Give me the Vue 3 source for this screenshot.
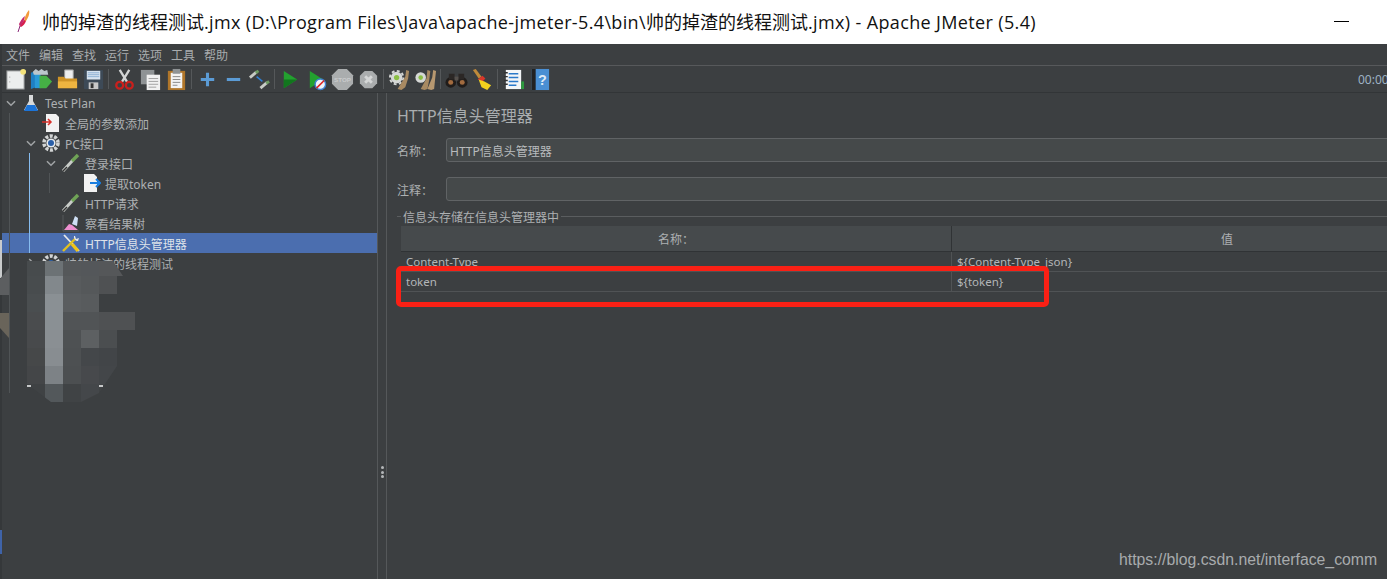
<script setup>
const mosaicRows = [
  ['#474b4d', '#6c7275', '#55585a', '#54575a', '#555759', '#555759', ''],
  ['#484c4e', '#82888c', '#585b5d', '#55585a', '#4f5153', '', ''],
  ['#4a4e50', '#8a9094', '#5a5d5f', '#585b5d', '', '', ''],
  ['#4a4c4e', '#8a9094', '#515456', '#515456', '#4f5153', '#4f5153', ''],
  ['#484a4c', '#8a8f93', '#4e5153', '#5d6062', '#4b4e50', '', ''],
  ['#464849', '#888d91', '#4d5052', '#44474a', '#424548', '', ''],
  ['#444648', '#7d8286', '#4c4f51', '#47494c', '#434649', '', ''],
  ['#3f4244', '#53585b', '#404345', '#44474a', '#404345', '', ''],
]
const mosaicCells = mosaicRows.flat()
</script>

<template>
  <div class="page">
    <header class="titlebar">
      <svg class="feather" width="14" height="24" viewBox="0 0 14 24">
        <path d="M12 1 C13 5 11 9 9 12 L7 12 C8 8 9 4 12 1Z" fill="#f39a3a" />
        <path d="M9 12 C8 15 6 17 4 18 L3 17 C4 15 6 13 7 11Z" fill="#d81f4b" />
        <path d="M7 11 C6 14 4 16 3 18 L2 15 C3 13 5 9 8 7Z" fill="#c42a6c" />
        <path d="M3 17 L1 23" stroke="#8b2a7a" stroke-width="1" />
      </svg>
      <span class="title"><span class="cjk">帅的掉渣的线程测试</span>.jmx (D:\Program Files\Java\apache-jmeter-5.4\bin\<span class="cjk">帅的掉渣的线程测试</span>.jmx) - Apache JMeter (5.4)</span>
      <i class="minimize"></i>
    </header>

    <nav class="menubar">
      <span>文件</span><span>编辑</span><span>查找</span><span>运行</span><span>选项</span><span>工具</span><span>帮助</span>
    </nav>

    <div class="toolbar">
      <div class="tool"><svg viewBox="0 0 24 24"><rect x="3" y="3" width="18" height="19" fill="#eceeee" stroke="#8d9092" /><circle cx="20" cy="4" r="3" fill="#f3e27a" /><path d="M6 9v1M6 14v1" stroke="#999" /></svg></div>
      <div class="tool"><svg viewBox="0 0 24 24"><path d="M1 5l5-2v17l-5 2z" fill="#1f7fc4" /><path d="M5 5h6v16H5z" fill="#2a9ad8" /><path d="M10 8h7l6 6-6 7h-7z" fill="#45b045" /><path d="M3 4l3-3 3 2 3-2 3 2 3-1 1 5H4z" fill="#bcc6cc" /></svg></div>
      <div class="tool"><svg viewBox="0 0 24 24"><path d="M9 2h9v10H9z" fill="#eee" stroke="#999" /><path d="M2 9h6l2 2h12v10H2z" fill="#cf9326" /><path d="M2 14h20v7H2z" fill="#eeb440" /></svg></div>
      <div class="tool"><svg viewBox="0 0 24 24"><rect x="2" y="2" width="20" height="20" rx="1" fill="#3d4a57" /><rect x="5" y="3" width="14" height="9" fill="#d7e3ef" /><path d="M6 5h12M6 7h12M6 9h12" stroke="#8bb0d3" /><rect x="7" y="15" width="10" height="7" fill="#c8c8c8" /><rect x="9" y="16" width="3" height="5" fill="#333" /></svg></div>
      <i class="sep"></i>
      <div class="tool"><svg viewBox="0 0 24 24" fill="none"><path d="M7 2l8 13M17 2L9 15" stroke="#d4d6d6" stroke-width="2.4" /><circle cx="7" cy="18" r="3.6" stroke="#c9201d" stroke-width="2.4" /><circle cx="17" cy="18" r="3.6" stroke="#c9201d" stroke-width="2.4" /></svg></div>
      <div class="tool"><svg viewBox="0 0 24 24"><rect x="2" y="2" width="14" height="15" fill="#8f9395" /><rect x="8" y="7" width="14" height="16" fill="#f1f1f1" /><path d="M10 11h10M10 14h10M10 17h10M10 20h8" stroke="#a0a0a0" /></svg></div>
      <div class="tool"><svg viewBox="0 0 24 24"><rect x="3" y="3" width="18" height="20" fill="#b0762a" /><rect x="6" y="5" width="12" height="16" fill="#f3f3f3" /><rect x="8" y="1" width="8" height="5" fill="#8f9395" /><path d="M8 9h8M8 12h8M8 15h8M8 18h5" stroke="#888" /></svg></div>
      <i class="sep"></i>
      <div class="tool"><svg viewBox="0 0 24 24"><path d="M12 5v14M5 12h14" stroke="#5b9bd5" stroke-width="3.2" /></svg></div>
      <div class="tool"><svg viewBox="0 0 24 24"><path d="M5 12h14" stroke="#5b9bd5" stroke-width="3.2" /></svg></div>
      <div class="tool"><svg viewBox="0 0 24 24"><path d="M2 10L9 4" stroke="#c7cbc6" stroke-width="3" /><path d="M8 5l3-2" stroke="#6e9c63" stroke-width="3" /><path d="M13 21l7-6" stroke="#c7cbc6" stroke-width="3" /><path d="M19 16l3-2" stroke="#6e9c63" stroke-width="3" /><path d="M9 9l6 5" stroke="#2f7fd2" stroke-width="1.6" /></svg></div>
      <i class="sep"></i>
      <div class="tool"><svg viewBox="0 0 24 24"><path d="M5 3l14 9-14 9z" fill="#23a12f" /><path d="M5 12h14l-14 9z" fill="#12761e" /></svg></div>
      <div class="tool"><svg viewBox="0 0 24 24"><path d="M5 3l14 9-14 9z" fill="#23a12f" /><circle cx="16" cy="17" r="5.5" fill="#eef4fa" stroke="#3f7fd0" stroke-width="1.5" /><path d="M12 21l8-8" stroke="#d22" stroke-width="1.6" /></svg></div>
      <div class="tool"><svg viewBox="0 0 24 24"><path d="M7.500 1h9L23 7.500v9L16.500 23h-9L1 16.500v-9z" fill="#aaadae" /><text x="12" y="15" text-anchor="middle" class="stop">STOP</text></svg></div>
      <div class="tool"><svg viewBox="0 0 24 24"><path d="M8 3h8l5 5v8l-5 5H8l-5-5V8z" fill="#aaadae" /><path d="M8.500 8.500l7 7M15.500 8.500l-7 7" stroke="#d4d6d6" stroke-width="3" /></svg></div>
      <i class="sep"></i>
      <div class="tool"><svg viewBox="0 0 24 24"><circle cx="9" cy="10" r="6" fill="#d6d8d6" /><circle cx="9" cy="10" r="7" fill="none" stroke="#d6d8d6" stroke-width="2" stroke-dasharray="3 2.500" /><circle cx="9" cy="10" r="2.800" fill="#8bbf45" /><path d="M14 23l-4-1 8-13 1-7 3 1-1 8-3 9z" fill="#a88a62" /></svg></div>
      <div class="tool"><svg viewBox="0 0 24 24"><circle cx="7" cy="10" r="5.500" fill="#d6d8d6" /><circle cx="7" cy="10" r="2.400" fill="#8bbf45" /><path d="M11 23l-4-1 6-11 1-9 3 1-1 9-2 10z" fill="#a88a62" /><path d="M18 23l-4-1 5-12 1-8 3 1-1 9-1 10z" fill="#b79870" /></svg></div>
      <i class="sep"></i>
      <div class="tool"><svg viewBox="0 0 24 24"><circle cx="6" cy="15" r="5.500" fill="#201c1a" /><circle cx="18" cy="15" r="5.500" fill="#201c1a" /><circle cx="6" cy="15" r="2.600" fill="#a26b3f" /><circle cx="18" cy="15" r="2.600" fill="#a26b3f" /><rect x="4" y="6" width="6" height="6" fill="#2b2725" /><rect x="14" y="6" width="6" height="6" fill="#2b2725" /><rect x="10" y="9" width="4" height="4" fill="#55504c" /></svg></div>
      <div class="tool"><svg viewBox="0 0 24 24"><path d="M2 2l3-1 6 8-3 2z" fill="#c08a3a" /><path d="M7 12l5-4 3 3-3 3z" fill="#d9372a" /><path d="M8 12l6 2 7 4-4 5-6-3z" fill="#f2d21e" /></svg></div>
      <i class="sep"></i>
      <div class="tool"><svg viewBox="0 0 24 24"><rect x="4" y="2" width="16" height="20" fill="#f3f5f7" /><path d="M7 6h10M7 10h10M7 14h10M7 18h8" stroke="#2b79c9" stroke-width="1.500" /><path d="M2 5h4M2 9h4M2 13h4M2 17h4" stroke="#333" stroke-width="1.500" /><rect x="20" y="14" width="3" height="8" fill="#2d9a3e" /></svg></div>
      <div class="tool"><svg viewBox="0 0 24 24"><rect x="4" y="1" width="18" height="22" fill="#4a8fd3" /><rect x="4" y="1" width="4" height="22" fill="#222" /><text x="15" y="18" text-anchor="middle" class="help">?</text></svg></div>
      <div class="timer">00:00:00</div>
    </div>

    <div class="main">
      <aside class="tree">
        <i class="guide g1"></i>
        <i class="guide g2"></i>
        <i class="guide g3"></i>

        <div class="row d0">
          <svg class="chev" viewBox="0 0 20 20"><path d="M5.500 8l4.500 4.500L14.500 8" /></svg>
          <svg class="ico" viewBox="0 0 20 20"><path d="M8 2h4v6l5 9H3l5-9z" fill="#d8dadb" /><path d="M6 12h8l3 6H3z" fill="#1c74d8" /></svg>
          <span>Test Plan</span>
        </div>
        <div class="row d1">
          <span class="nochev"></span>
          <svg class="ico" viewBox="0 0 20 20"><path d="M5 1h10l3 3v15H5z" fill="#f2f2f2" /><path d="M1 9h9M7 6l3 3-3 3" stroke="#d8302a" stroke-width="1.500" fill="none" /></svg>
          <span>全局的参数添加</span>
        </div>
        <div class="row d1">
          <svg class="chev" viewBox="0 0 20 20"><path d="M5.500 8l4.500 4.500L14.500 8" /></svg>
          <svg class="ico" viewBox="0 0 20 20"><circle cx="10" cy="10" r="7" fill="none" stroke="#d2d4d4" stroke-width="3.600" stroke-dasharray="3 1.500" /><circle cx="10" cy="10" r="4.600" fill="#e8ecef" /><circle cx="10" cy="10" r="3" fill="#2a5fa8" /></svg>
          <span>PC接口</span>
        </div>
        <div class="row d2">
          <svg class="chev" viewBox="0 0 20 20"><path d="M5.500 8l4.500 4.500L14.500 8" /></svg>
          <svg class="ico" viewBox="0 0 20 20"><path d="M2 18L12 7" stroke="#c8ccc8" stroke-width="3" /><path d="M11 8l6-6" stroke="#6fa356" stroke-width="3.400" /><path d="M2 18l4-4" stroke="#333" stroke-width="1.500" /></svg>
          <span>登录接口</span>
        </div>
        <div class="row d3">
          <span class="nochev"></span>
          <svg class="ico" viewBox="0 0 20 20"><path d="M3 1h10l3 3v15H3z" fill="#f2f2f2" /><path d="M9 10h9M15 6l4 4-4 4" stroke="#1a7ee0" stroke-width="2" fill="none" /></svg>
          <span>提取token</span>
        </div>
        <div class="row d2">
          <span class="nochev"></span>
          <svg class="ico" viewBox="0 0 20 20"><path d="M2 18L12 7" stroke="#c8ccc8" stroke-width="3" /><path d="M11 8l6-6" stroke="#6fa356" stroke-width="3.400" /><path d="M2 18l4-4" stroke="#333" stroke-width="1.500" /></svg>
          <span>HTTP请求</span>
        </div>
        <div class="row d2">
          <span class="nochev"></span>
          <svg class="ico" viewBox="0 0 20 20"><path d="M2 2v16h16" fill="none" stroke="#55585a" /><path d="M3 17l5-6 3 1 6 5z" fill="#ee8fd0" /><path d="M11 11l3-8 3 2-1 8z" fill="#cfe0f5" /></svg>
          <span>察看结果树</span>
        </div>
        <div class="row d2 selected">
          <span class="nochev"></span>
          <svg class="ico" viewBox="0 0 20 20"><path d="M3 2l15 16" stroke="#e6e8ea" stroke-width="1.800" /><path d="M11 11l6 7" stroke="#f0c419" stroke-width="3.400" /><path d="M2 18L14 6" stroke="#e0c020" stroke-width="2.400" /><path d="M13 3a4 4 0 0 0 4 5l1-3-3 1-1-3z" fill="#e6e8ea" /></svg>
          <span>HTTP信息头管理器</span>
        </div>
        <div class="row d1">
          <svg class="chev" viewBox="0 0 20 20"><path d="M8 5.500l4.500 4.500L8 14.500" /></svg>
          <svg class="ico" viewBox="0 0 20 20"><circle cx="10" cy="10" r="7" fill="none" stroke="#d2d4d4" stroke-width="3.600" stroke-dasharray="3 1.500" /><circle cx="10" cy="10" r="3" fill="#2a5fa8" /></svg>
          <span>帅的掉渣的线程测试</span>
        </div>

        <div class="mosaic">
          <i v-for="(color, idx) in mosaicCells" :key="idx" :style="{ background: color }"></i>
        </div>
        <i class="speck s1"></i>
        <i class="speck s2"></i>
        <i class="edge e0"></i>
        <i class="edge e1"></i>
        <i class="edge e2"></i>
        <i class="edge e3"></i>
        <i class="edge e4"></i>
      </aside>

      <div class="splitter"><i></i><i></i><i></i></div>

      <section class="content">
        <h2>HTTP信息头管理器</h2>
        <div class="field">
          <label>名称：</label>
          <div class="input">HTTP信息头管理器</div>
        </div>
        <div class="field second">
          <label>注释：</label>
          <div class="input"></div>
        </div>
        <div class="legend"><i class="dash"></i><span>信息头存储在信息头管理器中</span><i class="fill"></i></div>
        <div class="table">
          <div class="thead">
            <div class="cname">名称：</div>
            <div class="cval">值</div>
          </div>
          <div class="tr">
            <div class="cname">Content-Type</div>
            <div class="cval">${Content-Type_json}</div>
          </div>
          <div class="tr">
            <div class="cname">token</div>
            <div class="cval">${token}</div>
          </div>
        </div>
      </section>
    </div>

    <div class="redbox"></div>
    <div class="watermark">https://blog.csdn.net/interface_comm</div>
  </div>
</template>

<style scoped>
.page {
  position: relative;
  width: 1387px;
  height: 579px;
  overflow: hidden;
  display: flex;
  flex-direction: column;
  background: #3c3f41;
  color: #b3b6b8;
  font-family: "Noto Sans", "Noto Sans CJK SC", sans-serif;
  font-size: 12px;
}
.titlebar {
  height: 44px;
  flex: none;
  box-sizing: border-box;
  padding: 0 0 3px 17px;
  background: #fff;
  display: flex;
  align-items: center;
  color: #111;
}
.feather { flex: none; margin-right: 11px; margin-top: 1px; }
.title {
  font-family: "Open Sans", "Noto Sans CJK SC", sans-serif;
  font-size: 18px;
  letter-spacing: 0.36px;
  white-space: nowrap;
}
.cjk { letter-spacing: 0; }
.minimize {
  position: absolute;
  left: 1334px;
  top: 21px;
  width: 15px;
  height: 1px;
  background: #000;
}
.menubar {
  height: 21px;
  flex: none;
  display: flex;
  align-items: center;
  gap: 9px;
  padding-left: 6px;
  border-bottom: 1px solid #57595b;
  color: #a9acae;
}
.toolbar {
  height: 26px;
  flex: none;
  display: flex;
  align-items: center;
  padding-left: 2px;
  border-bottom: 1px solid #323537;
}
.tool {
  width: 26px;
  height: 26px;
  flex: none;
  display: flex;
  align-items: center;
  justify-content: center;
}
.tool svg { width: 23px; height: 23px; display: block; }
.sep {
  width: 1px;
  height: 20px;
  margin: 0 2px;
  flex: none;
  background: #55585a;
}
.stop { font: bold 6.500px "Liberation Sans", sans-serif; fill: #c9cbcc; }
.help { font: bold 15px "Liberation Sans", sans-serif; fill: #dfeaf6; }
.timer {
  margin-left: auto;
  width: 29px;
  white-space: nowrap;
  font-size: 12px;
  color: #9eb2c4;
}
.main {
  flex: 1;
  display: flex;
  min-height: 0;
}
.tree {
  position: relative;
  width: 377px;
  flex: none;
  padding-left: 2px;
  box-sizing: border-box;
}
.row {
  position: relative;
  height: 20px;
  display: flex;
  align-items: center;
  white-space: nowrap;
  color: #adb0b2;
  z-index: 1;
}
.row:not(.d0) > span:last-child { margin-top: 2px; }
.d0 { padding-left: 0; }
.d1 { padding-left: 20px; }
.d2 { padding-left: 40px; }
.d3 { padding-left: 60px; }
.chev, .nochev { width: 18px; height: 20px; flex: none; }
.chev path { fill: none; stroke: #a0a3a5; stroke-width: 1.700; }
.ico { width: 20px; height: 20px; flex: none; margin-left: 1px; margin-right: 4px; }
.selected {
  background: #4b6eaf;
  color: #dfe3ea;
}
.guide {
  position: absolute;
  width: 1px;
  z-index: 2;
}
.g1 { left: 9px; top: 20px; height: 280px; background: #505456; }
.g2 { left: 29px; top: 60px; height: 100px; background: #86bcef; }
.g3 { left: 49px; top: 80px; height: 20px; background: #505456; }
.mosaic {
  position: absolute;
  z-index: 3;
  left: 27px;
  top: 165px;
  display: grid;
  grid-template-columns: repeat(7, 18px);
  grid-auto-rows: 18px;
  clip-path: polygon(0 3px, 86px 3px, 96px 18px, 90px 18px, 90px 36px, 72px 36px, 72px 54px, 108px 54px, 108px 72px, 90px 72px, 90px 108px, 72px 135px, 54px 144px, 24px 144px, 0 126px);
}
.speck {
  position: absolute;
  z-index: 4;
  width: 4px;
  height: 2px;
  background: #c6c8c9;
}
.s1 { left: 27px; top: 292px; }
.s2 { left: 99px; top: 292px; }
.edge {
  position: absolute;
  z-index: 4;
  left: 0;
}
.e0 { top: -49px; bottom: 0; width: 2px; background: #35383a; z-index: 3; }
.e1 { top: 147px; width: 2px; height: 38px; background: #c9cbcc; }
.e2 { top: 175px; width: 9px; height: 27px; background: #5c5e60; clip-path: polygon(100% 0, 100% 100%, 0 100%, 0 40%); }
.e3 { top: 220px; width: 9px; height: 25px; background: #69645a; clip-path: polygon(0 0, 100% 0, 100% 100%, 0 60%); }
.e4 { top: 437px; width: 2px; height: 24px; background: #3f63a8; }
.splitter {
  width: 8px;
  flex: none;
  border-left: 1px solid #55585a;
  border-right: 1px solid #55585a;
  display: flex;
  flex-direction: column;
  align-items: center;
  justify-content: center;
  gap: 1.5px;
  padding-top: 272px;
}
.splitter i {
  width: 3px;
  height: 3px;
  border-radius: 50%;
  background: #b3b6b8;
}
.content {
  flex: 1;
  min-width: 0;
  overflow: hidden;
  padding: 10px 0 0 10px;
}
.content h2 {
  margin: 0;
  height: 23px;
  font-size: 16px;
  line-height: 27px;
  font-weight: 400;
  color: #a9adaf;
  white-space: nowrap;
}
.field {
  display: flex;
  align-items: center;
  margin-top: 12px;
}
.field.second { margin-top: 15px; }
.field label {
  width: 49px;
  flex: none;
  margin-top: 2px;
  color: #adb0b2;
  white-space: nowrap;
}
.input {
  flex: 1;
  height: 24px;
  line-height: 25px;
  padding-left: 3px;
  box-sizing: border-box;
  margin-right: -4px;
  border: 1px solid #606365;
  border-radius: 3px;
  background: #45494a;
  color: #b8bbbd;
}
.legend {
  display: flex;
  align-items: center;
  gap: 2px;
  height: 17px;
  margin-top: 7px;
  color: #adb0b2;
}
.legend .dash { width: 4px; height: 1px; background: #5a5d5f; flex: none; }
.legend .fill { flex: 1; height: 1px; background: #5a5d5f; }
.table { margin: 1px 0 0 4px; }
.thead, .tr { display: flex; }
.thead {
  height: 25px;
  line-height: 28px;
  background: #464a4c;
  border-bottom: 1px solid #303335;
  text-align: center;
  color: #adb0b2;
}
.tr {
  height: 19px;
  line-height: 20px;
  font-size: 11.5px;
  border-bottom: 1px solid #505355;
}
.cname {
  width: 551px;
  flex: none;
  box-sizing: border-box;
  border-right: 1px solid #505355;
}
.tr .cname { padding-left: 5px; }
.tr .cval { padding-left: 5px; }
.cval { flex: none; width: 550px; box-sizing: border-box; }
.thead .cname { border-right-color: #303335; }
.redbox {
  position: absolute;
  left: 396px;
  top: 266px;
  width: 653px;
  height: 41px;
  box-sizing: border-box;
  border: 5px solid #fa2015;
  border-radius: 5px;
  z-index: 5;
}
.watermark {
  position: absolute;
  left: 1119px;
  top: 550px;
  font-family: "Liberation Sans", sans-serif;
  font-size: 15.8px;
  line-height: 20px;
  color: #a8abad;
  white-space: nowrap;
}
</style>
